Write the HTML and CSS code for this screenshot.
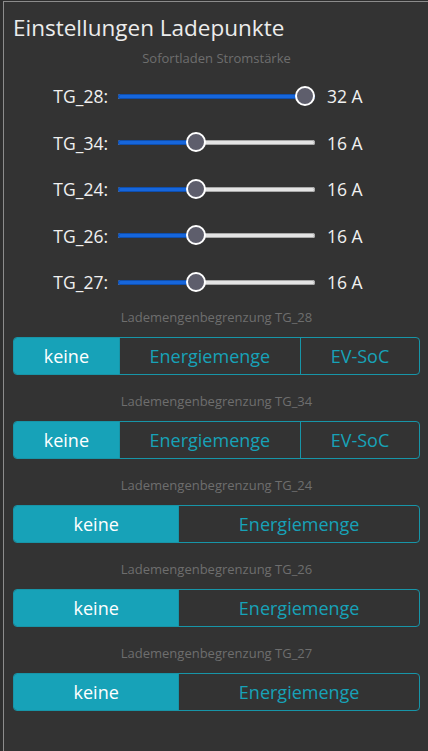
FILE: index.html
```html
<!DOCTYPE html>
<html lang="de">
<head>
<meta charset="utf-8">
<title>Einstellungen Ladepunkte</title>
<link rel="stylesheet" href="styles.css">
</head>
<body>
<div class="panel">
  <h1 class="title">Einstellungen Ladepunkte</h1>
  <div class="caption first">Sofortladen Stromstärke</div>
  <div class="sliders">
    <div class="srow"><span class="slabel">TG_28:</span><div class="track"><div class="fill" style="width:197px"></div><div class="thumb" style="left:177px"></div></div><span class="sval">32 A</span></div>
    <div class="srow"><span class="slabel">TG_34:</span><div class="track"><div class="fill" style="width:78px"></div><div class="thumb" style="left:68px"></div></div><span class="sval">16 A</span></div>
    <div class="srow"><span class="slabel">TG_24:</span><div class="track"><div class="fill" style="width:78px"></div><div class="thumb" style="left:68px"></div></div><span class="sval">16 A</span></div>
    <div class="srow"><span class="slabel">TG_26:</span><div class="track"><div class="fill" style="width:78px"></div><div class="thumb" style="left:68px"></div></div><span class="sval">16 A</span></div>
    <div class="srow"><span class="slabel">TG_27:</span><div class="track"><div class="fill" style="width:78px"></div><div class="thumb" style="left:68px"></div></div><span class="sval">16 A</span></div>
  </div>

  <div class="section">
    <div class="caption">Lademengenbegrenzung TG_28</div>
    <div class="group"><button class="btn active">keine</button><button class="btn">Energiemenge</button><button class="btn">EV-SoC</button></div>
  </div>
  <div class="section">
    <div class="caption">Lademengenbegrenzung TG_34</div>
    <div class="group"><button class="btn active">keine</button><button class="btn">Energiemenge</button><button class="btn">EV-SoC</button></div>
  </div>
  <div class="section">
    <div class="caption">Lademengenbegrenzung TG_24</div>
    <div class="group"><button class="btn active">keine</button><button class="btn">Energiemenge</button></div>
  </div>
  <div class="section">
    <div class="caption">Lademengenbegrenzung TG_26</div>
    <div class="group"><button class="btn active">keine</button><button class="btn">Energiemenge</button></div>
  </div>
  <div class="section">
    <div class="caption">Lademengenbegrenzung TG_27</div>
    <div class="group"><button class="btn active">keine</button><button class="btn">Energiemenge</button></div>
  </div>
</div>
</body>
</html>
```

FILE: styles.css
```css
html, body {
  margin: 0;
  padding: 0;
  height: 100%;
  background: #2e2e2e;
  overflow: hidden;
}

body {
  font-family: "Open Sans", "Noto Sans", sans-serif;
}

.panel {
  margin: 1px 0 0 3px;
  border-top: 1px solid #8c8c8c;
  border-left: 1px solid #8c8c8c;
  background: #333333;
  min-height: 760px;
  padding: 0 8px 0 9px;
  box-sizing: border-box;
}

.title {
  margin: 0;
  padding-top: 12px;
  font-size: 22.5px;
  line-height: 28px;
  font-weight: 400;
  color: #ececec;
  letter-spacing: 0;
}

.caption {
  font-size: 13px;
  line-height: 16px;
  color: #6e6e6e;
  text-align: center;
}

.caption.first {
  margin-top: 8px;
}

.sliders {
  margin-top: 6.75px;
  margin-bottom: 4px;
}

.srow {
  height: 46.5px;
  display: grid;
  grid-template-columns: 95px 197px auto;
  column-gap: 10px;
  align-items: center;
}

.slabel {
  text-align: right;
  font-size: 17.5px;
  color: #f0f0f0;
}

.sval {
  margin-left: 2px;
  font-size: 17.5px;
  color: #f0f0f0;
}

.track {
  position: relative;
  height: 5px;
  border-radius: 3px;
  background: #e4e4e4;
  box-shadow: inset 0 0 0 1px #a9a9a9;
}

.fill {
  height: 100%;
  border-radius: 3px;
  background: #1666dc;
  box-shadow: inset 0 0 0 1px #0f4fae;
}

.thumb {
  position: absolute;
  top: -8px;
  width: 20px;
  height: 20px;
  box-sizing: border-box;
  border-radius: 50%;
  background: #5e5e6c;
  border: 2px solid #ffffff;
}

.section .caption {
  margin-bottom: 12px;
}

.section {
  margin-bottom: 18px;
}

.group {
  display: flex;
  height: 38px;
  box-sizing: border-box;
  border: 1px solid #1795a8;
  border-radius: 4px;
  overflow: hidden;
}

.btn {
  flex: 1 1 auto;
  margin: 0;
  padding: 0;
  border: none;
  border-left: 1px solid #1795a8;
  background: transparent;
  font-family: "Open Sans", "Noto Sans", sans-serif;
  font-size: 18px;
  color: #17a2b8;
  cursor: pointer;
}

.btn:first-child {
  border-left: none;
}

.btn.active {
  background: #17a2b8;
  color: #ffffff;
}
```
